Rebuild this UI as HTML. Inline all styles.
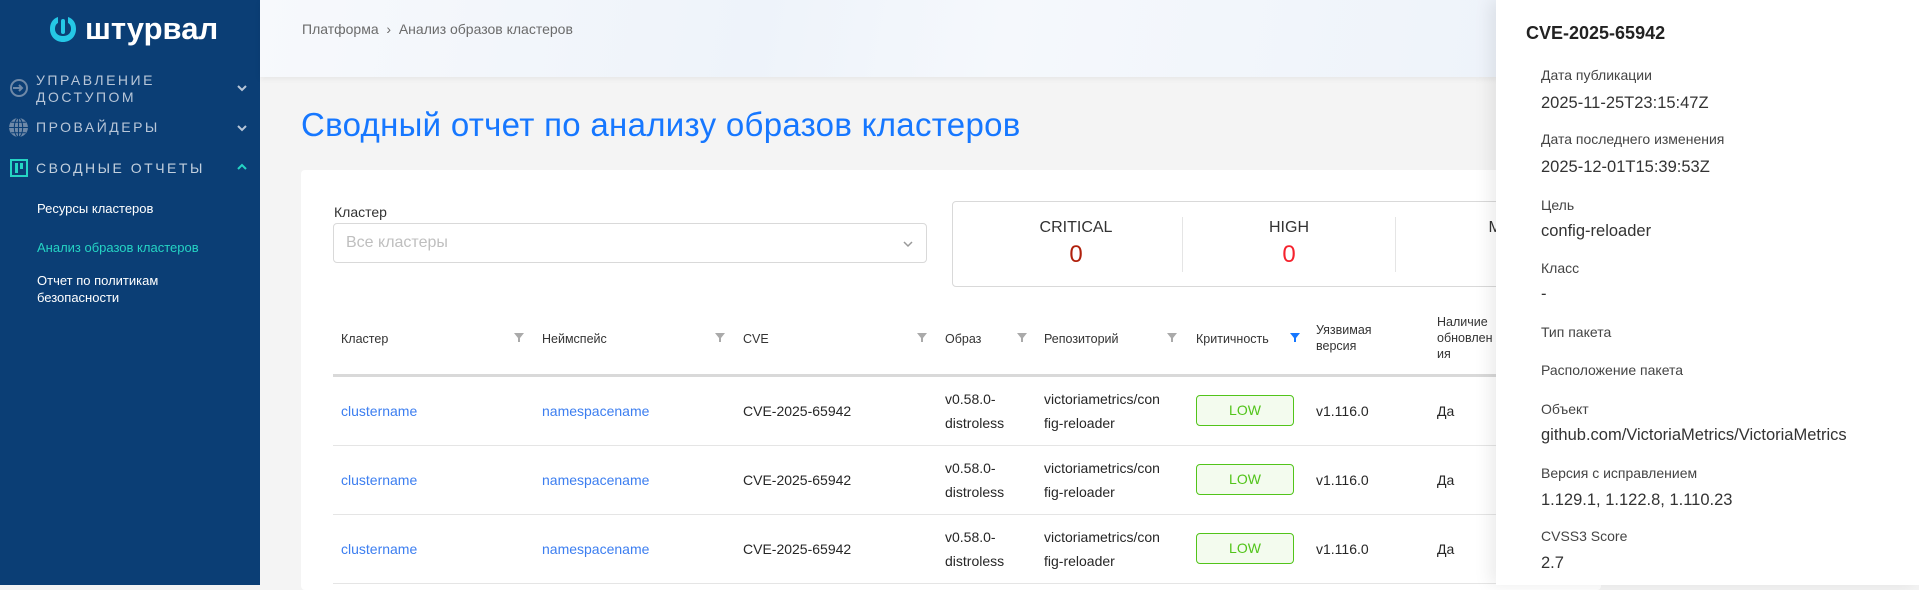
<!DOCTYPE html>
<html><head><meta charset="utf-8"><style>
*{box-sizing:border-box;margin:0;padding:0}
body{width:1919px;height:585px;overflow:hidden;font-family:"Liberation Sans","Noto Sans CJK SC",sans-serif;background:#f4f4f4;position:relative;color:#262626}
.sb{position:absolute;left:0;top:0;width:260px;height:585px;background:#0b3e75;color:#fff}
.logo{position:absolute;left:49px;top:12px;height:34px;display:flex;align-items:center;gap:8px;font-size:31px;font-weight:bold;letter-spacing:0}
.mi{position:absolute;left:36px;font-size:14px;letter-spacing:2.5px;color:#b8c6d8;line-height:17px}
.sub{position:absolute;left:37px;font-size:13px;color:#fff;line-height:17px}
.chev{position:absolute;left:236px;width:12px;height:12px}
.hdr{position:absolute;left:260px;top:0;width:1240px;height:77px;background:linear-gradient(100deg,#f7f9fc 0%,#eef3fa 40%,#f5f8fc 60%,#eef3fa 100%);box-shadow:0 2px 6px rgba(0,0,0,.06)}
.bc{position:absolute;left:302px;top:21px;font-size:14px;color:#6b6b6b}
.title{position:absolute;left:301px;top:106px;font-size:33px;color:#1677ff;font-weight:normal;letter-spacing:0.3px}
.card{position:absolute;left:301px;top:170px;width:1300px;height:420px;background:#fff;border-radius:4px}
.lbl{position:absolute;left:334px;top:204px;font-size:14px;color:#333}
.sel{position:absolute;left:333px;top:223px;width:594px;height:40px;border:1px solid #d9d9d9;border-radius:4px;font-size:16px;color:#bfbfbf;padding:10px 12px}
.stats{position:absolute;left:952px;top:201px;width:700px;height:86px;border:1px solid #d9d9d9;border-radius:4px}
.st{position:absolute;top:17px;width:200px;text-align:center;font-size:16px;color:#333}
.st b{display:block;font-weight:normal;font-size:24px;margin-top:4px}
.dv{position:absolute;top:15px;width:1px;height:55px;background:#e5e5e5}
.th{position:absolute;top:330px;font-size:12.5px;color:#333;line-height:16px}
.fi{position:absolute;top:333px;width:10px;height:10px}
.hl{position:absolute;left:333px;width:1170px;height:3px;top:374px;background:#d9d9d9}
.rl{position:absolute;left:333px;width:1170px;height:1px;background:#e5e5e5}
.c{position:absolute;font-size:14px;color:#262626;line-height:24px}
.a{color:#3c7ef0}
.low{position:absolute;left:1196px;width:98px;height:31px;border:1px solid #52c41a;border-radius:4px;background:#f3fbee;color:#52c41a;font-size:14px;text-align:center;line-height:29px}
.dr{position:absolute;left:1496px;top:0;width:423px;height:585px;background:#fff;box-shadow:-6px 0 16px rgba(0,0,0,.08)}
.dt{position:absolute;left:1526px;top:23px;font-size:18px;font-weight:bold;color:#222}
.dl{position:absolute;left:1541px;font-size:14px;color:#444}
.dvl{position:absolute;left:1541px;font-size:16.5px;color:#333}
</style></head><body>
<div class="sb">
 <div class="logo"><svg width="28" height="30" viewBox="0 0 28 30"><path d="M9 3 C3 5 1 10 1 15 C1 23 7 28 14 28 C21 28 27 23 27 15 C27 10 25 5 19 3 L19 9 C21 10 22 12 22 15 C22 19 19 22 14 22 C9 22 6 19 6 15 C6 12 7 10 9 9Z" fill="#25c7e6"/><rect x="12" y="5" width="4" height="15" rx="2" fill="#25c7e6"/></svg><span>штурвал</span></div>
 <svg style="position:absolute;left:9px;top:78px" width="20" height="20" viewBox="0 0 20 20"><circle cx="10" cy="10" r="8" fill="none" stroke="#6f89a8" stroke-width="2"/><path d="M4 10h9M10 7l3 3-3 3" stroke="#6f89a8" stroke-width="2" fill="none"/></svg>
 <div class="mi" style="top:72px">УПРАВЛЕНИЕ<br>ДОСТУПОМ</div>
 <svg class="chev" style="top:82px" viewBox="0 0 12 12"><path d="M2 4l4 4 4-4" stroke="#b8c6d8" stroke-width="2" fill="none"/></svg>
 <svg style="position:absolute;left:8px;top:117px" width="21" height="21" viewBox="0 0 20 20"><circle cx="10" cy="10" r="9" fill="#6f89a8"/><path d="M1 10h18M10 1v18M3 5h14M3 15h14" stroke="#0b3e75" stroke-width="1"/><ellipse cx="10" cy="10" rx="4" ry="9" fill="none" stroke="#0b3e75"/></svg>
 <div class="mi" style="top:119px">ПРОВАЙДЕРЫ</div>
 <svg class="chev" style="top:122px" viewBox="0 0 12 12"><path d="M2 4l4 4 4-4" stroke="#b8c6d8" stroke-width="2" fill="none"/></svg>
 <div style="position:absolute;left:10px;top:159px;width:18px;height:18px;border:2px solid #25d4c4"><div style="position:absolute;left:3px;top:2px;width:3px;height:10px;background:#25d4c4"></div><div style="position:absolute;left:8px;top:2px;width:3px;height:6px;background:#25d4c4"></div></div>
 <div class="mi" style="top:160px;color:#c3d0de">СВОДНЫЕ ОТЧЕТЫ</div>
 <svg class="chev" style="top:161px" viewBox="0 0 12 12"><path d="M2 8l4-4 4 4" stroke="#25d4c4" stroke-width="2" fill="none"/></svg>
 <div class="sub" style="top:200px">Ресурсы кластеров</div>
 <div class="sub" style="top:239px;color:#25d4c4">Анализ образов кластеров</div>
 <div class="sub" style="top:272px">Отчет по политикам<br>безопасности</div>
</div>
<div class="hdr"></div>
<div class="bc">Платформа &nbsp;›&nbsp; Анализ образов кластеров</div>
<div class="title">Сводный отчет по анализу образов кластеров</div>
<div class="card"></div>
<div class="lbl">Кластер</div>
<div class="sel">Все кластеры<svg style="position:absolute;right:12px;top:14px" width="12" height="12" viewBox="0 0 12 12"><path d="M2 4l4 4 4-4" stroke="#999" stroke-width="1.5" fill="none"/></svg></div>
<div class="stats">
 <div class="st" style="left:23px">CRITICAL<b style="color:#b0200c">0</b></div>
 <div class="dv" style="left:229px"></div>
 <div class="st" style="left:236px">HIGH<b style="color:#f5222d">0</b></div>
 <div class="dv" style="left:442px"></div>
 <div class="st" style="left:468px">MEDIUM<b style="color:#faad14">9</b></div>
</div>
<div class="th" style="left:341px;top:331px">Кластер</div>
<div class="th" style="left:542px;top:331px">Неймспейс</div>
<div class="th" style="left:743px;top:331px">CVE</div>
<div class="th" style="left:945px;top:331px">Образ</div>
<div class="th" style="left:1044px;top:331px">Репозиторий</div>
<div class="th" style="left:1196px;top:331px">Критичность</div>
<div class="th" style="left:1316px;top:322px">Уязвимая<br>версия</div>
<div class="th" style="left:1437px;top:314px">Наличие<br>обновлен<br>ия</div>
<svg class="fi" style="left:514px" viewBox="0 0 10 10"><path d="M0 0h10L6 5v4H4V5z" fill="#aaa"/></svg>
<svg class="fi" style="left:715px" viewBox="0 0 10 10"><path d="M0 0h10L6 5v4H4V5z" fill="#aaa"/></svg>
<svg class="fi" style="left:917px" viewBox="0 0 10 10"><path d="M0 0h10L6 5v4H4V5z" fill="#aaa"/></svg>
<svg class="fi" style="left:1017px" viewBox="0 0 10 10"><path d="M0 0h10L6 5v4H4V5z" fill="#aaa"/></svg>
<svg class="fi" style="left:1167px" viewBox="0 0 10 10"><path d="M0 0h10L6 5v4H4V5z" fill="#aaa"/></svg>
<svg class="fi" style="left:1290px" viewBox="0 0 10 10"><path d="M0 0h10L6 5v4H4V5z" fill="#1677ff"/></svg>
<div class="hl"></div>
<div class="rl" style="top:445px"></div>
<div class="rl" style="top:514px"></div>
<div class="rl" style="top:583px"></div>

<div class="c a" style="left:341px;top:399px">clustername</div>
<div class="c a" style="left:542px;top:399px">namespacename</div>
<div class="c" style="left:743px;top:399px">CVE-2025-65942</div>
<div class="c" style="left:945px;top:387px">v0.58.0-<br>distroless</div>
<div class="c" style="left:1044px;top:387px">victoriametrics/con<br>fig-reloader</div>
<div class="low" style="top:395px">LOW</div>
<div class="c" style="left:1316px;top:399px">v1.116.0</div>
<div class="c" style="left:1437px;top:399px">Да</div>

<div class="c a" style="left:341px;top:468px">clustername</div>
<div class="c a" style="left:542px;top:468px">namespacename</div>
<div class="c" style="left:743px;top:468px">CVE-2025-65942</div>
<div class="c" style="left:945px;top:456px">v0.58.0-<br>distroless</div>
<div class="c" style="left:1044px;top:456px">victoriametrics/con<br>fig-reloader</div>
<div class="low" style="top:464px">LOW</div>
<div class="c" style="left:1316px;top:468px">v1.116.0</div>
<div class="c" style="left:1437px;top:468px">Да</div>

<div class="c a" style="left:341px;top:537px">clustername</div>
<div class="c a" style="left:542px;top:537px">namespacename</div>
<div class="c" style="left:743px;top:537px">CVE-2025-65942</div>
<div class="c" style="left:945px;top:525px">v0.58.0-<br>distroless</div>
<div class="c" style="left:1044px;top:525px">victoriametrics/con<br>fig-reloader</div>
<div class="low" style="top:533px">LOW</div>
<div class="c" style="left:1316px;top:537px">v1.116.0</div>
<div class="c" style="left:1437px;top:537px">Да</div>

<div class="dr"></div>
<div class="dt">CVE-2025-65942</div>
<div class="dl" style="top:67px">Дата публикации</div>
<div class="dvl" style="top:94px">2025-11-25T23:15:47Z</div>
<div class="dl" style="top:131px">Дата последнего изменения</div>
<div class="dvl" style="top:158px">2025-12-01T15:39:53Z</div>
<div class="dl" style="top:197px">Цель</div>
<div class="dvl" style="top:222px">config-reloader</div>
<div class="dl" style="top:260px">Класс</div>
<div class="dvl" style="top:285px">-</div>
<div class="dl" style="top:324px">Тип пакета</div>
<div class="dl" style="top:362px">Расположение пакета</div>
<div class="dl" style="top:401px">Объект</div>
<div class="dvl" style="top:426px">github.com/VictoriaMetrics/VictoriaMetrics</div>
<div class="dl" style="top:465px">Версия с исправлением</div>
<div class="dvl" style="top:491px">1.129.1, 1.122.8, 1.110.23</div>
<div class="dl" style="top:528px">CVSS3 Score</div>
<div class="dvl" style="top:554px">2.7</div>
</body></html>
